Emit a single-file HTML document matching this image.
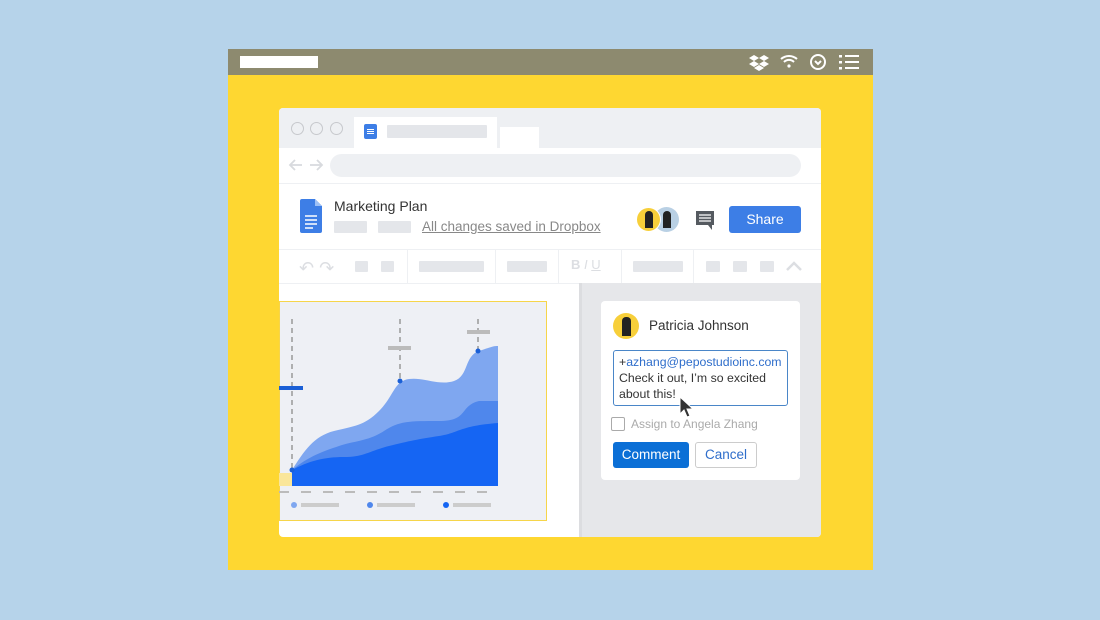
<!DOCTYPE html>
<html><head><style>
*{margin:0;padding:0;box-sizing:border-box}
body{width:1100px;height:620px;background:#b6d3ea;position:relative;overflow:hidden;font-family:"Liberation Sans",sans-serif}
.a{position:absolute}
.g{background:#e4e6ea;position:absolute;border-radius:1px}
</style></head><body>
<div class="a" style="left:228px;top:49px;width:645px;height:26px;background:#8d8a6f"></div>
<div class="a" style="left:240px;top:56px;width:78px;height:12px;background:#fff"></div>
<svg class="a" style="left:748px;top:52px" width="115" height="20" viewBox="0 0 115 20">
<g fill="#fff"><path d="M6 3l5 3-5 3-5-3zM16 3l5 3-5 3-5-3zM6 9l5 3-5 3-5-3zM16 9l5 3-5 3-5-3zM11 13l5 3-5 3-5-3z"/></g>
<g fill="none" stroke="#fff" stroke-width="2"><path d="M33 7a12 12 0 0 1 16 0M36 10a7 7 0 0 1 10 0"/><circle cx="70" cy="10" r="7"/><path d="M67 9l3 3 3-3"/><path d="M97 4h14M97 10h14M97 16h14" /></g>
<circle cx="41" cy="14" r="1.6" fill="#fff"/><rect x="91" y="3" width="3" height="2.5" fill="#fff"/><rect x="91" y="9" width="3" height="2.5" fill="#fff"/><rect x="91" y="15" width="3" height="2.5" fill="#fff"/>
</svg>
<div class="a" style="left:228px;top:75px;width:645px;height:495px;background:#fed731"></div>
<div class="a" style="left:279px;top:108px;width:542px;height:429px;background:#fff;border-radius:4px;overflow:hidden">
 <div class="a" style="left:0;top:0;width:542px;height:40px;background:#eef0f3"></div>
 <div class="a" style="left:12px;top:14px;width:13px;height:13px;border:1.5px solid #c7c9cd;border-radius:50%"></div>
 <div class="a" style="left:31px;top:14px;width:13px;height:13px;border:1.5px solid #c7c9cd;border-radius:50%"></div>
 <div class="a" style="left:51px;top:14px;width:13px;height:13px;border:1.5px solid #c7c9cd;border-radius:50%"></div>
 <div class="a" style="left:75px;top:9px;width:143px;height:31px;background:#fff"></div>
 <div class="a" style="left:85px;top:16px;width:13px;height:15px;background:#3d7ee6;border-radius:2px"></div>
 <div class="a" style="left:88px;top:21px;width:7px;height:1px;background:#fff;box-shadow:0 2px #fff,0 4px #fff"></div>
 <div class="g" style="left:108px;top:17px;width:100px;height:13px"></div>
 <div class="a" style="left:221px;top:19px;width:39px;height:21px;background:#fff"></div>
 <svg class="a" style="left:9px;top:50px" width="36" height="14"><path d="M14 7H2M7 2L2 7l5 5M22 7h12M29 2l5 5-5 5" stroke="#d8dade" stroke-width="1.8" fill="none"/></svg>
 <div class="a" style="left:51px;top:46px;width:471px;height:23px;background:#eef0f3;border-radius:12px"></div>
 <div class="a" style="left:0;top:75px;width:542px;height:1px;background:#eef0f3"></div>
 <svg class="a" style="left:20px;top:91px" width="24" height="34"><path d="M3 0h13l7 7v25a2 2 0 0 1-2 2H3a2 2 0 0 1-2-2V2a2 2 0 0 1 2-2z" fill="#3d7ee6"/><path d="M16 0v7h7z" fill="#9dc0f5"/><path d="M6 17h12M6 21h12M6 25h12M6 29h8" stroke="#fff" stroke-width="1.5"/></svg>
 <div class="a" style="left:55px;top:90px;font-size:14px;color:#333">Marketing Plan</div>
 <div class="g" style="left:55px;top:113px;width:33px;height:12px"></div>
 <div class="g" style="left:99px;top:113px;width:33px;height:12px"></div>
 <div class="a" style="left:143px;top:111px;font-size:13.5px;color:#888;text-decoration:underline">All changes saved in Dropbox</div>
 <div class="a" style="left:375px;top:99px;width:25px;height:25px;border-radius:50%;background:#b9d0e4"></div>
 <div class="a" style="left:357px;top:99px;width:25px;height:25px;border-radius:50%;background:#f7cf3a;border:1px solid #fff"></div>
 <div class="a" style="left:366px;top:103px;width:8px;height:17px;border-radius:4px 4px 0 0;background:#222"></div>
 <div class="a" style="left:384px;top:103px;width:8px;height:17px;border-radius:4px 4px 0 0;background:#222"></div>
 <svg class="a" style="left:416px;top:102px" width="20" height="22"><path d="M1 1h18v14h-2v5l-4-5H1z" fill="#555a60"/><path d="M4 5h12M4 8h12M4 11h12" stroke="#fff" stroke-width="1.3"/></svg>
 <div class="a" style="left:450px;top:98px;width:72px;height:27px;background:#3d7ee6;border-radius:3px;color:#fff;font-size:14px;text-align:center;line-height:27px">Share</div>
 <div class="a" style="left:0;top:141px;width:542px;height:1px;background:#eef0f3"></div>
 <div class="a" style="left:20px;top:150px;color:#dcdee2;font-size:18px">↶ ↷</div>
 <div class="g" style="left:76px;top:153px;width:13px;height:11px"></div>
 <div class="g" style="left:102px;top:153px;width:13px;height:11px"></div>
 <div class="a" style="left:128px;top:142px;width:1px;height:33px;background:#eef0f3"></div>
 <div class="g" style="left:140px;top:153px;width:65px;height:11px"></div>
 <div class="a" style="left:216px;top:142px;width:1px;height:33px;background:#eef0f3"></div>
 <div class="g" style="left:228px;top:153px;width:40px;height:11px"></div>
 <div class="a" style="left:279px;top:142px;width:1px;height:33px;background:#eef0f3"></div>
 <div class="a" style="left:292px;top:149px;color:#dcdee2;font-size:13px;font-weight:bold">B <i style="font-weight:normal">I</i> <u style="font-weight:normal">U</u></div>
 <div class="a" style="left:342px;top:142px;width:1px;height:33px;background:#eef0f3"></div>
 <div class="g" style="left:354px;top:153px;width:50px;height:11px"></div>
 <div class="a" style="left:414px;top:142px;width:1px;height:33px;background:#eef0f3"></div>
 <div class="g" style="left:427px;top:153px;width:14px;height:11px"></div>
 <div class="g" style="left:454px;top:153px;width:14px;height:11px"></div>
 <div class="g" style="left:481px;top:153px;width:14px;height:11px"></div>
 <svg class="a" style="left:506px;top:152px" width="18" height="12"><path d="M2 10l7-7 7 7" stroke="#dcdee2" stroke-width="2.5" fill="none"/></svg>
 <div class="a" style="left:0;top:175px;width:542px;height:1px;background:#eef0f3"></div>
 <div class="a" style="left:302px;top:175px;width:240px;height:254px;background:#e6e7ea"></div>
 <div class="a" style="left:300px;top:175px;width:3px;height:254px;background:#dcdde0"></div>
</div>
<div class="a" style="left:279px;top:301px;width:268px;height:220px;background:#eef0f5;border:1.5px solid #f6d54a"></div>
<svg class="a" style="left:279px;top:301px" width="268" height="220">
<path d="M0 172h14v13H0z" fill="#fae69a"/>
<g stroke="#999" stroke-width="1.5" stroke-dasharray="5 4" fill="none"><path d="M13 18v150M121 18v60M199 18v32"/></g>
<path d="M13 169C25 150 35 135 55 130S85 125 100 110S115 80 130 78S160 85 175 80S185 55 200 50S215 45 219 45V185H13z" fill="#7fa7f0"/>
<path d="M13 169C30 155 45 150 60 145S90 140 105 130S130 120 160 120S180 105 200 100H219V185H13z" fill="#4f87ec"/>
<path d="M13 169C30 160 45 156 65 156S90 150 110 145S140 138 160 135S180 125 219 122V185H13z" fill="#1565f3"/>
<circle cx="13" cy="169" r="2.5" fill="#1a5fd6"/><circle cx="121" cy="80" r="2.5" fill="#1a5fd6"/><circle cx="199" cy="50" r="2.5" fill="#1a5fd6"/>
<rect x="0" y="85" width="24" height="4" fill="#1a5fd6"/><rect x="109" y="45" width="23" height="4" fill="#bbb"/><rect x="188" y="29" width="23" height="4" fill="#bbb"/>
<path d="M0 191H215" stroke="#bbb" stroke-width="2" stroke-dasharray="10 12"/>
<circle cx="15" cy="204" r="3" fill="#7fa7f0"/><rect x="22" y="202" width="38" height="4" fill="#ccc"/>
<circle cx="91" cy="204" r="3" fill="#4f87ec"/><rect x="98" y="202" width="38" height="4" fill="#ccc"/>
<circle cx="167" cy="204" r="3" fill="#1565f3"/><rect x="174" y="202" width="38" height="4" fill="#ccc"/>
</svg>
<div class="a" style="left:601px;top:301px;width:199px;height:179px;background:#fff;border-radius:4px"></div>
<div class="a" style="left:613px;top:313px;width:26px;height:26px;border-radius:50%;background:#f7cf3a"></div>
<div class="a" style="left:622px;top:317px;width:9px;height:19px;border-radius:4px 4px 0 0;background:#222"></div>
<div class="a" style="left:649px;top:318px;font-size:13.5px;color:#333">Patricia Johnson</div>
<div class="a" style="left:613px;top:350px;width:175px;height:56px;border:1.5px solid #4a86c8;border-radius:3px;padding:3px 5px;font-size:12.3px;line-height:16px;color:#333">+<span style="color:#2f6ecb">azhang@pepostudioinc.com</span><br>Check it out, I’m so excited<br>about this!</div>
<svg class="a" style="left:678px;top:396px" width="16" height="24"><path d="M2 1v17l4-4 3 7 3-1-3-7h6z" fill="#333" stroke="#fff" stroke-width="1"/></svg>
<div class="a" style="left:611px;top:417px;width:14px;height:14px;border:1.5px solid #aaa;border-radius:2px"></div>
<div class="a" style="left:631px;top:417px;font-size:12px;color:#aaa">Assign to Angela Zhang</div>
<div class="a" style="left:613px;top:442px;width:76px;height:26px;background:#0b6fd6;border-radius:3px;color:#fff;font-size:13.5px;text-align:center;line-height:26px">Comment</div>
<div class="a" style="left:695px;top:442px;width:62px;height:26px;border:1px solid #ccc;border-radius:3px;color:#2f6ecb;font-size:13.5px;text-align:center;line-height:24px">Cancel</div>
</body></html>
